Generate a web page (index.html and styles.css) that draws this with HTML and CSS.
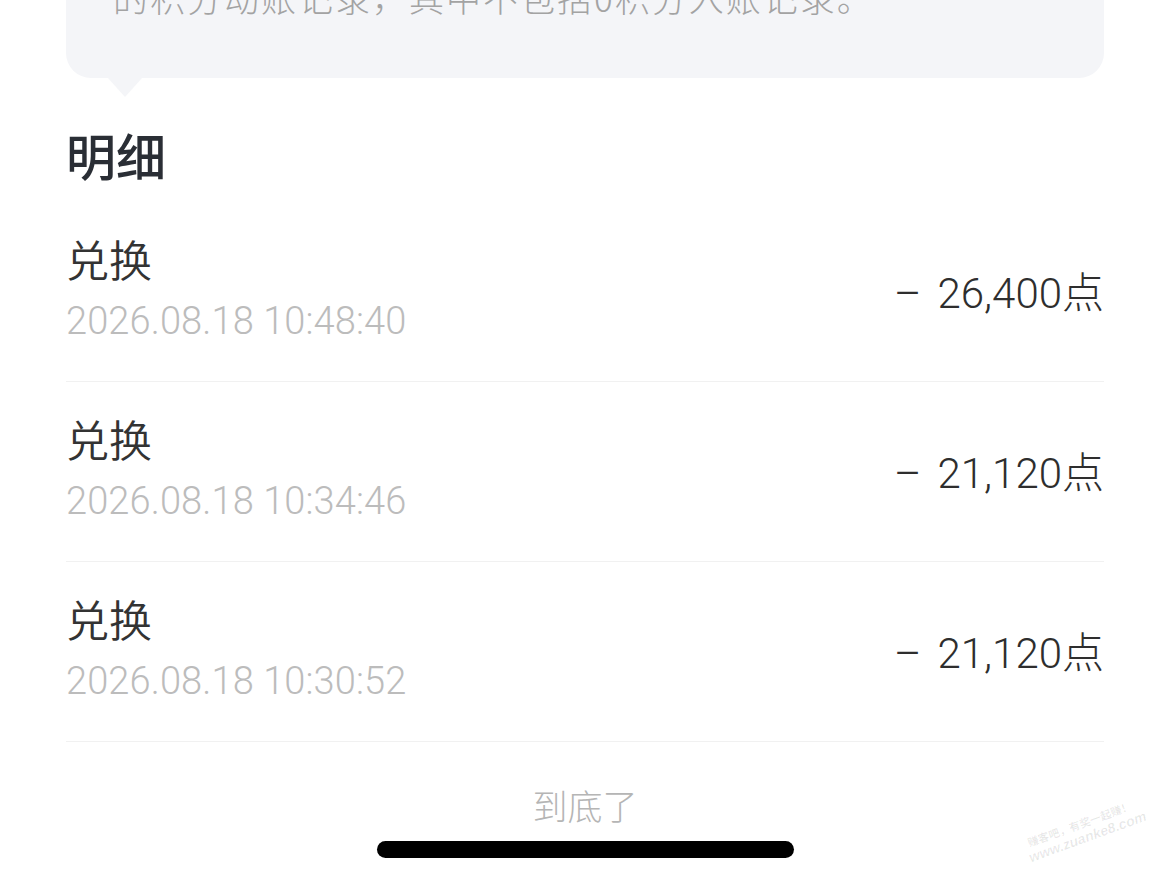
FILE: index.html
```html
<!DOCTYPE html>
<html lang="zh-CN">
<head>
<meta charset="utf-8">
<title>明细</title>
<link rel="stylesheet" href="styles.css">
</head>
<body>
<div class="page">
  <div class="notice">
    <p class="notice-text">的积分动账记录，其中不包括0积分入账记录。</p>
  </div>
  <h2 class="title">明细</h2>
  <ul class="list">
    <li class="row">
      <div class="info">
        <div class="name">兑换</div>
        <div class="date">2026.08.18 10:48:40</div>
      </div>
      <div class="amount"><span class="minus">–</span>26,400点</div>
    </li>
    <li class="row">
      <div class="info">
        <div class="name">兑换</div>
        <div class="date">2026.08.18 10:34:46</div>
      </div>
      <div class="amount"><span class="minus">–</span>21,120点</div>
    </li>
    <li class="row">
      <div class="info">
        <div class="name">兑换</div>
        <div class="date">2026.08.18 10:30:52</div>
      </div>
      <div class="amount"><span class="minus">–</span>21,120点</div>
    </li>
  </ul>
  <div class="end">到底了</div>
</div>
<div class="home-bar"></div>
<div class="watermark">
  <div class="wm-cn">赚客吧，有奖一起赚！</div>
  <div class="wm-en">www.zuanke8.com</div>
</div>
</body>
</html>
```

FILE: styles.css
```css
html, body {
  margin: 0;
  padding: 0;
  background: #ffffff;
}
body {
  width: 1170px;
  height: 881px;
  overflow: hidden;
  position: relative;
  font-family: "Roboto", "Noto Sans CJK SC", sans-serif;
}
.page {
  padding: 0 66px;
}
.notice {
  position: relative;
  height: 78px;
  background: #f4f5f8;
  border-radius: 0 0 25px 25px;
  padding: 0 47px;
}
.notice::after {
  content: "";
  position: absolute;
  left: 42px;
  top: 78px;
  width: 0;
  height: 0;
  border-left: 17px solid transparent;
  border-right: 17px solid transparent;
  border-top: 19px solid #f4f5f8;
}
.notice-text {
  margin: 0;
  position: relative;
  top: -27px;
  font-family: "Noto Sans CJK SC", sans-serif;
  font-size: 35px;
  line-height: 48px;
  letter-spacing: 2px;
  color: #a3a3a3;
  font-weight: 300;
  white-space: nowrap;
}
.title {
  margin: 51px 0 0;
  font-family: "Noto Sans CJK SC", sans-serif;
  font-size: 50px;
  line-height: 50px;
  font-weight: 500;
  color: #2a2e35;
}
.list {
  list-style: none;
  margin: 23px 0 0;
  padding: 0;
}
.row {
  display: flex;
  justify-content: space-between;
  align-items: center;
  padding: 35px 0 41px;
  border-bottom: 1px solid #f1f1f1;
}
.info {
  display: flex;
  flex-direction: column;
  gap: 24px;
}
.name {
  font-family: "Noto Sans CJK SC", sans-serif;
  font-size: 43px;
  line-height: 42px;
  color: #333333;
  font-weight: 350;
}
.date {
  font-size: 38px;
  line-height: 37px;
  letter-spacing: 0.1px;
  font-weight: 300;
  color: #bcbcbc;
}
.amount {
  margin-top: 10px;
  font-size: 42px;
  line-height: 40px;
  font-weight: 300;
  color: #2e2e2e;
  white-space: nowrap;
}
.minus {
  margin-right: 16px;
}
.end {
  margin-top: 43px;
  text-align: center;
  font-family: "Noto Sans CJK SC", sans-serif;
  font-size: 35px;
  line-height: 40px;
  font-weight: 300;
  color: #b5b5b5;
}
.home-bar {
  position: absolute;
  left: 377px;
  top: 841px;
  width: 417px;
  height: 17px;
  border-radius: 9px;
  background: #000000;
}
.watermark {
  position: absolute;
  left: 1022px;
  top: 838px;
  transform: rotate(-20deg);
  transform-origin: left top;
  color: rgba(0, 0, 0, 0.09);
  font-family: "Noto Sans CJK SC", sans-serif;
  line-height: 1.15;
  white-space: nowrap;
}
.wm-cn {
  font-size: 11px;
  font-weight: 700;
  margin-left: 4px;
}
.wm-en {
  font-family: "Liberation Sans", sans-serif;
  font-size: 14px;
  font-weight: 700;
  font-style: italic;
}
```
